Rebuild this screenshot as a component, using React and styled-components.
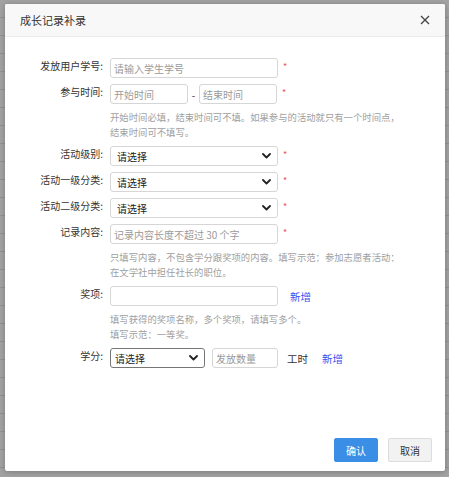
import React from "react";
import styled, { createGlobalStyle } from "styled-components";

const Global = createGlobalStyle`
  html, body { margin: 0; padding: 0; }
  body {
    font-family: "Noto Sans CJK SC", "Noto Sans", sans-serif;
    background: #a3a3a3;
  }
  * { box-sizing: border-box; }
`;

const Page = styled.div`
  width: 449px;
  height: 477px;
  padding: 4px 4px 6px 5px;
  background-color: #a3a3a3;
  background-image: repeating-linear-gradient(
    to bottom,
    transparent 0px,
    transparent 17px,
    #939393 17px,
    #939393 18px
  );
  overflow: hidden;
`;

const Dialog = styled.div`
  width: 440px;
  height: 467px;
  background: #fff;
  border-radius: 2px;
  box-shadow: 0 1px 6px rgba(0, 0, 0, 0.25);
  display: flex;
  flex-direction: column;
  overflow: hidden;
`;

const Header = styled.div`
  height: 33px;
  flex: none;
  background: #f8f8f8;
  border-bottom: 1px solid #ebebeb;
  display: flex;
  align-items: center;
  justify-content: space-between;
  padding: 0 14px 0 15px;
`;

const Title = styled.div`
  font-size: 11px;
  color: #333;
`;

const Close = styled.button`
  border: 0;
  background: none;
  padding: 0;
  width: 12px;
  height: 12px;
  display: flex;
  align-items: center;
  justify-content: center;
  cursor: pointer;
`;

const Body = styled.div`
  flex: 1;
  padding: 21px 0 0 0;
  display: flex;
  flex-direction: column;
`;

const Row = styled.div`
  display: flex;
  align-items: flex-start;
  margin-bottom: 6px;
`;

const Label = styled.div`
  width: 98px;
  flex: none;
  text-align: right;
  font-size: 10px;
  line-height: 16px;
  color: #333;
  margin-right: 7px;
`;

const Field = styled.div`
  display: flex;
  align-items: center;
  height: 20px;
`;

const Input = styled.input`
  width: ${(p) => p.$w}px;
  height: 20px;
  border: 1px solid #d6d6d6;
  border-radius: 3px;
  padding: 0 3px;
  font-family: inherit;
  font-size: 10px;
  color: #333;
  background: #fff;
  outline: none;
  &::placeholder {
    color: #9a9a9a;
  }
`;

const SelectBox = styled.div`
  width: ${(p) => p.$w}px;
  height: 20px;
  border: 1px solid ${(p) => (p.$dark ? "#767676" : "#d6d6d6")};
  border-radius: 3px;
  padding: 0 6px 0 ${(p) => (p.$dark ? 4 : 6)}px;
  display: flex;
  align-items: center;
  justify-content: space-between;
  font-size: 10px;
  color: #222;
  background: #fff;
`;

const Star = styled.span`
  color: #f05050;
  font-size: 9px;
  margin-left: 5px;
  margin-top: -3px;
`;

const Dash = styled.span`
  font-size: 10px;
  color: #333;
  width: 11px;
  text-align: center;
`;

const Help = styled.div`
  margin: 0 0 6px 105px;
  font-size: 9.35px;
  line-height: 15px;
  color: #a0a0a0;
  white-space: nowrap;
`;

const Link = styled.span`
  color: #3b4ff0;
  font-size: 10.5px;
  margin-left: ${(p) => p.$ml}px;
`;

const Unit = styled.span`
  color: #333;
  font-size: 10.5px;
  margin-left: 9px;
`;

const Footer = styled.div`
  margin-top: auto;
  display: flex;
  justify-content: flex-end;
  gap: 10px;
  padding: 0 13px 9px 0;
`;

const Button = styled.button`
  width: 44px;
  height: 24px;
  border-radius: 2px;
  font-family: inherit;
  font-size: 10px;
  border: 1px solid ${(p) => (p.$primary ? "#3a8ee6" : "#dcdcdc")};
  background: ${(p) => (p.$primary ? "#3a8ee6" : "#f2f2f2")};
  color: ${(p) => (p.$primary ? "#fff" : "#333")};
  padding: 0;
  cursor: pointer;
`;

const Chevron = () => (
  <svg width="9" height="6" viewBox="0 0 9 6">
    <path d="M1 1 L4.5 4.5 L8 1" fill="none" stroke="#222" strokeWidth="1.8" strokeLinecap="round" strokeLinejoin="round" />
  </svg>
);

const Select = ({ w, dark }) => (
  <SelectBox $w={w} $dark={dark}>
    <span>请选择</span>
    <Chevron />
  </SelectBox>
);

export default function App() {
  return (
    <>
      <Global />
      <Page>
        <Dialog>
          <Header>
            <Title>成长记录补录</Title>
            <Close aria-label="close">
              <svg width="10" height="10" viewBox="0 0 10 10">
                <path d="M1 1 L9 9 M9 1 L1 9" stroke="#444" strokeWidth="1.3" />
              </svg>
            </Close>
          </Header>
          <Body>
            <Row>
              <Label>发放用户学号:</Label>
              <Field>
                <Input $w={168} placeholder="请输入学生学号" />
                <Star>*</Star>
              </Field>
            </Row>
            <Row>
              <Label>参与时间:</Label>
              <Field>
                <Input $w={78} placeholder="开始时间" />
                <Dash>-</Dash>
                <Input $w={78} placeholder="结束时间" />
                <Star>*</Star>
              </Field>
            </Row>
            <Help>
              开始时间必填，结束时间可不填。如果参与的活动就只有一个时间点，
              <br />
              结束时间可不填写。
            </Help>
            <Row>
              <Label>活动级别:</Label>
              <Field>
                <Select w={168} />
                <Star>*</Star>
              </Field>
            </Row>
            <Row>
              <Label>活动一级分类:</Label>
              <Field>
                <Select w={168} />
                <Star>*</Star>
              </Field>
            </Row>
            <Row>
              <Label>活动二级分类:</Label>
              <Field>
                <Select w={168} />
                <Star>*</Star>
              </Field>
            </Row>
            <Row>
              <Label>记录内容:</Label>
              <Field>
                <Input $w={168} placeholder="记录内容长度不超过 30 个字" />
                <Star>*</Star>
              </Field>
            </Row>
            <Help>
              只填写内容，不包含学分跟奖项的内容。填写示范：参加志愿者活动：
              <br />
              在文学社中担任社长的职位。
            </Help>
            <Row>
              <Label>奖项:</Label>
              <Field>
                <Input $w={168} />
                <Link $ml={12}>新增</Link>
              </Field>
            </Row>
            <Help>
              填写获得的奖项名称，多个奖项，请填写多个。
              <br />
              填写示范：一等奖。
            </Help>
            <Row>
              <Label>学分:</Label>
              <Field>
                <Select w={95} dark />
                <Input $w={66} placeholder="发放数量" style={{ marginLeft: 7 }} />
                <Unit>工时</Unit>
                <Link $ml={14}>新增</Link>
              </Field>
            </Row>
          </Body>
          <Footer>
            <Button $primary>确认</Button>
            <Button>取消</Button>
          </Footer>
        </Dialog>
      </Page>
    </>
  );
}
